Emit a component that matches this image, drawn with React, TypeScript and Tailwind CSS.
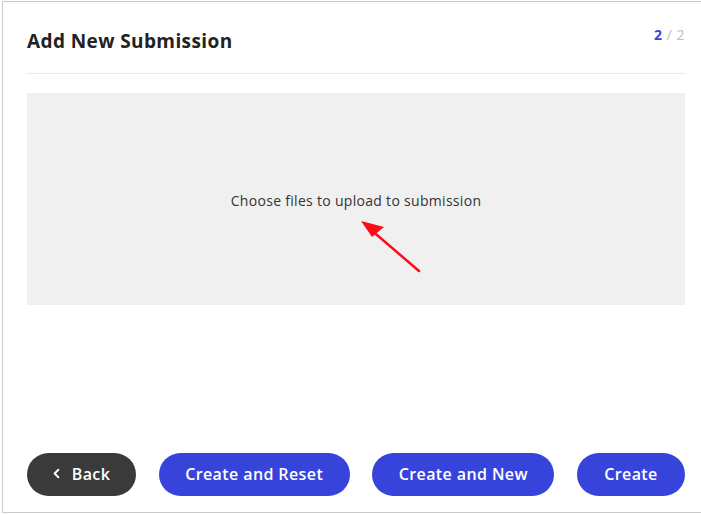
import { ChevronLeft } from "lucide-react";

export default function App() {
  return (
    <div className="bg-white w-[701px] h-[514px] overflow-hidden" style={{ fontFamily: "'Open Sans', 'Noto Sans', sans-serif" }}>
      <div className="mt-[1px] ml-[2px] w-[708px] h-[512px] border border-[#c9c9c9] px-6 flex flex-col">
        <div className="h-[72px] border-b border-[#e8e8e8] flex justify-between items-start">
          <h1 className="pt-[25px] text-[19px] leading-[28px] font-bold tracking-[0.4px] text-[#222222]">Add New Submission</h1>
          <div className="pt-[23px] text-[14px] leading-[20px] tracking-[0.5px]">
            <span className="font-bold text-[#3744dc]">2</span>
            <span className="text-[#bdbdbd]"> / 2</span>
          </div>
        </div>

        <div className="relative mt-[19px] h-[212px] bg-[#f0f0f0] flex items-center justify-center">
          <span className="pt-[3px] text-[14px] tracking-[0.3px] text-[#333333]">Choose files to upload to submission</span>
          <svg className="absolute left-0 top-0" width="658" height="212" viewBox="0 0 658 212">
            <line x1="392" y1="178" x2="343" y2="136" stroke="#ff0a1a" strokeWidth="2.5" strokeLinecap="round" />
            <polygon points="334,128 357,134 345,144" fill="#ff0a1a" />
          </svg>
        </div>

        <div className="flex-1" />

        <div className="pb-[16px] flex justify-between">
          <button className="w-[109px] h-[43px] pb-[2px] pr-[4px] rounded-full bg-[#3a3a3a] text-white text-[16px] font-semibold tracking-[0.4px] flex items-center justify-center gap-[8px]">
            <ChevronLeft size={15} strokeWidth={3} />
            Back
          </button>
          <button className="w-[191px] h-[43px] pb-[2px] rounded-full bg-[#3744dc] text-white text-[16px] font-semibold tracking-[0.4px]">Create and Reset</button>
          <button className="w-[182px] h-[43px] pb-[2px] rounded-full bg-[#3744dc] text-white text-[16px] font-semibold tracking-[0.4px]">Create and New</button>
          <button className="w-[108px] h-[43px] pb-[2px] rounded-full bg-[#3744dc] text-white text-[16px] font-semibold tracking-[0.4px]">Create</button>
        </div>
      </div>
    </div>
  );
}
